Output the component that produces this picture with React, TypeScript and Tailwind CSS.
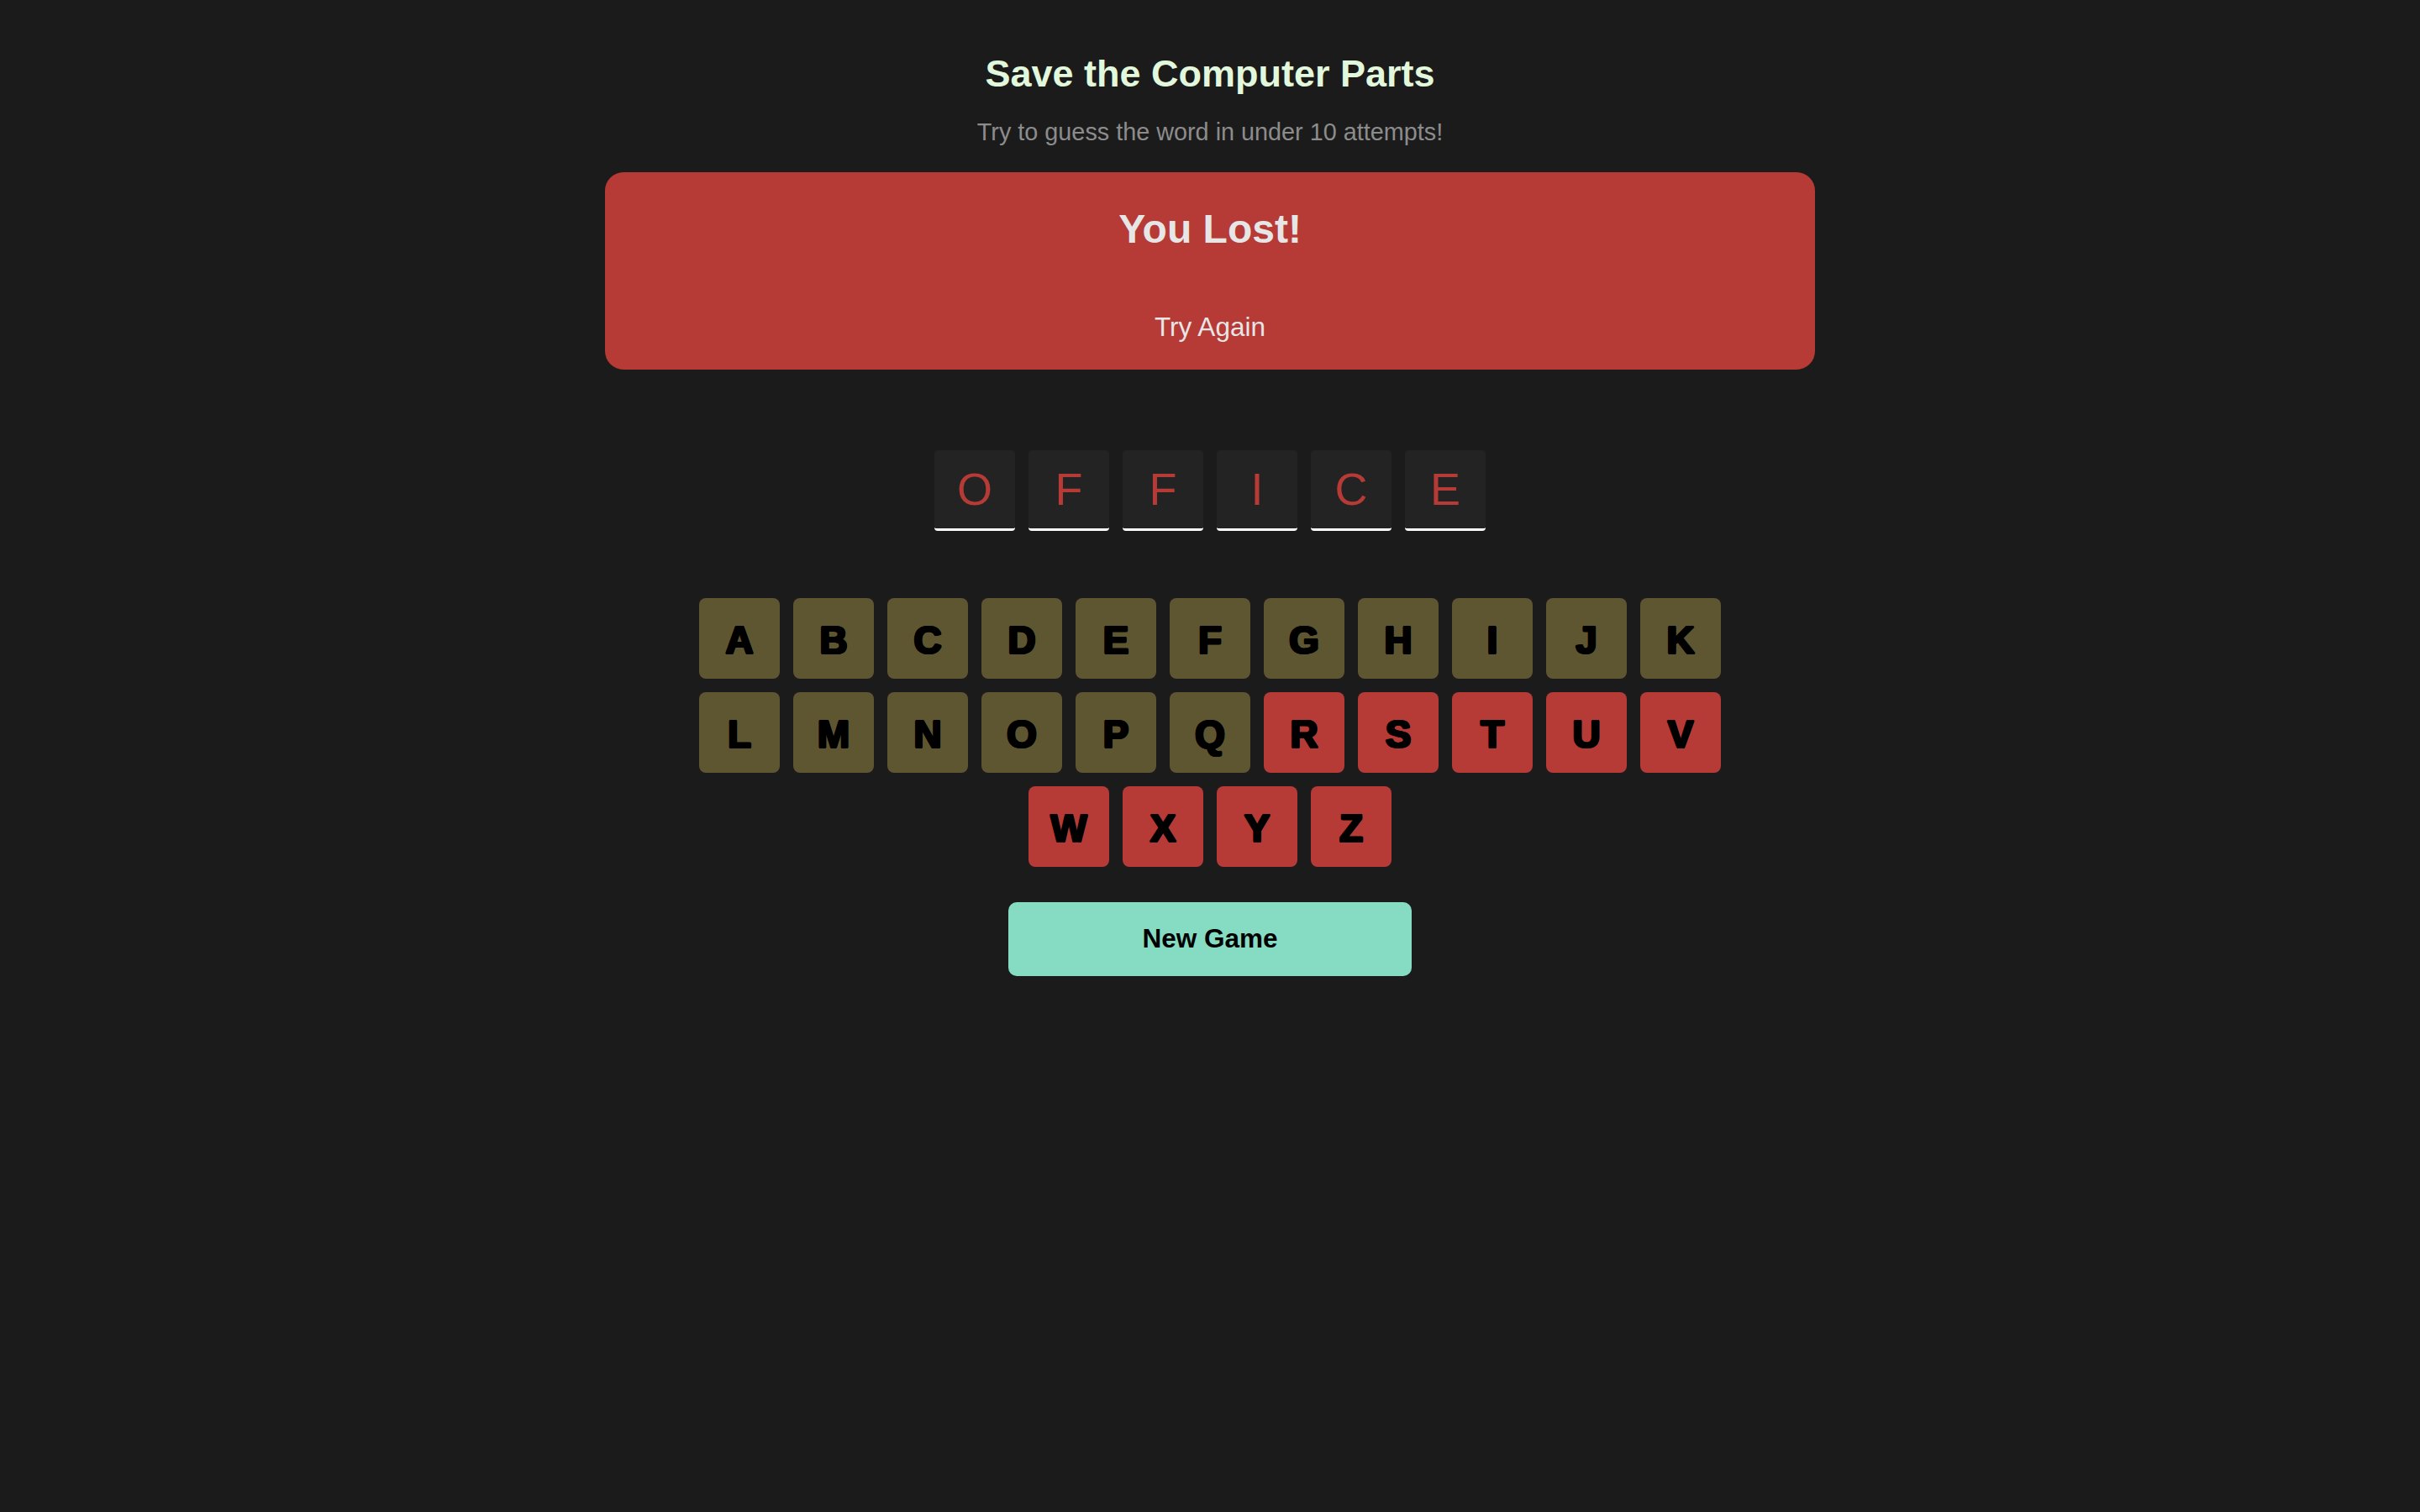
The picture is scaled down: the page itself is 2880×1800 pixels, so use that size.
import React from "react"

const rows = [
  ["A", "B", "C", "D", "E", "F", "G", "H", "I", "J", "K"],
  ["L", "M", "N", "O", "P", "Q", "R", "S", "T", "U", "V"],
  ["W", "X", "Y", "Z"],
]

// letters before R were "used" (olive), the rest are disabled after losing (red)
const usedLetters = "ABCDEFGHIJKLMNOPQ"

const word = "OFFICE"

function Key({ letter }: { letter: string }) {
  const used = usedLetters.includes(letter)
  return (
    <button
      className={
        "w-[96px] h-[96px] rounded-[8px] flex items-center justify-center pt-[4px] text-[46px] font-bold text-black [text-shadow:1.3px_0_0_black,-1.3px_0_0_black,0_1.3px_0_black,0_-1.3px_0_black,1px_1px_0_black,-1px_-1px_0_black,1px_-1px_0_black,-1px_1px_0_black] " +
        (used ? "bg-[#5e5631]" : "bg-[#b63a35]")
      }
    >
      {letter}
    </button>
  )
}

export default function App() {
  return (
    <div className="min-h-screen bg-[#1b1b1b] flex flex-col items-center font-['Liberation_Sans',Arial,sans-serif]">
      <h1 className="mt-[63px] text-[45px] leading-[50px] font-bold text-[#e2f8dc]">Save the Computer Parts</h1>
      <p className="mt-[28px] text-[28.8px] leading-[33px] text-[#8c8c8c]">
        Try to guess the word in under 10 attempts!
      </p>

      {/* Result banner */}
      <div className="mt-[31px] w-[1440px] h-[235px] rounded-[22px] bg-[#b63a35] flex flex-col items-center pt-[40px]">
        <h2 className="text-[48px] leading-[55px] font-bold text-[#e6e6e6]">You Lost!</h2>
        <p className="mt-[71px] text-[31.5px] leading-[36px] text-[#e6e6e6]">Try Again</p>
      </div>

      {/* Word */}
      <div className="mt-[96px] flex gap-4">
        {word.split("").map((ch, i) => (
          <div
            key={i}
            className="w-[96px] h-[96px] rounded-[4px] bg-[#232323] border-b-[3px] border-white flex items-center justify-center text-[54px] text-[#b63a35]"
          >
            {ch}
          </div>
        ))}
      </div>

      {/* Keyboard */}
      <div className="mt-[80px] flex flex-col items-center gap-4">
        {rows.map((row, i) => (
          <div key={i} className="flex gap-4">
            {row.map((l) => (
              <Key key={l} letter={l} />
            ))}
          </div>
        ))}
      </div>

      <button className="mt-[42px] w-[480px] h-[88px] rounded-[10px] bg-[#86dcc3] text-[31.5px] font-bold text-black">
        New Game
      </button>
    </div>
  )
}
